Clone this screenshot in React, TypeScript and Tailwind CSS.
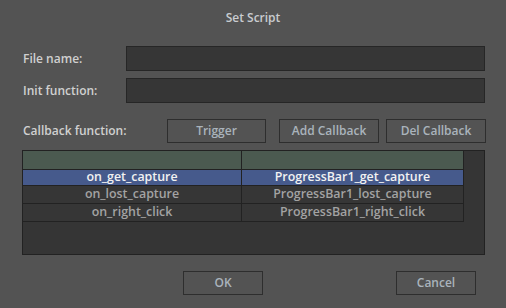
const rows = [
  { cb: "on_get_capture", fn: "ProgressBar1_get_capture", selected: true },
  { cb: "on_lost_capture", fn: "ProgressBar1_lost_capture", selected: false },
  { cb: "on_right_click", fn: "ProgressBar1_right_click", selected: false },
];

const Button = ({ label, className }: { label: string; className: string }) => (
  <div
    className={`h-[24px] border border-[#2e2e2e] flex items-center justify-center text-[#aab3bc] ${className}`}
  >
    {label}
  </div>
);

export default function App() {
  return (
    <div
      className="w-[506px] h-[308px] bg-[#535353] flex flex-col text-[12px] font-semibold overflow-hidden"
      style={{ fontFamily: '"Open Sans", "Noto Sans", sans-serif' }}
    >
      {/* Title */}
      <div className="h-[36px] pt-[8px] text-center text-[#c9ccd0] leading-[20px]">Set Script</div>

      {/* Fields */}
      <div className="pt-[10px] flex flex-col gap-[7px]">
        <div className="flex items-center">
          <div className="w-[126px] pl-[23px] text-[#d0d0d0]">File name:</div>
          <div className="w-[359px] h-[25px] bg-[#363636] border border-[#262626]" />
        </div>
        <div className="flex items-center">
          <div className="w-[126px] pl-[23px] text-[#d0d0d0]">Init function:</div>
          <div className="w-[359px] h-[25px] bg-[#363636] border border-[#262626]" />
        </div>
      </div>

      {/* Callback buttons */}
      <div className="mt-[16px] flex items-center">
        <div className="w-[167px] pl-[23px] text-[#d0d0d0]">Callback function:</div>
        <Button label="Trigger" className="w-[99px]" />
        <Button label="Add Callback" className="w-[100px] ml-[13px]" />
        <Button label="Del Callback" className="w-[100px] ml-[7px]" />
      </div>

      {/* Table */}
      <div className="mt-[7px] ml-[22px] w-[463px] h-[105px] bg-[#353535] border border-[#222]">
        <div className="w-[441px] border-r border-[#222] text-[12.4px]">
          <div className="grid grid-cols-[219px_221px] h-[19px] bg-[#4b5a50] border-b border-[#222]">
            <div className="border-r border-[#222]" />
            <div />
          </div>
          {rows.map((r) => (
            <div
              key={r.cb}
              className={`grid grid-cols-[219px_221px] border-b border-[#222] ${
                r.selected ? "h-[16px] bg-[#465a8c] text-[#f2f2f2]" : "h-[18px] bg-[#363636] text-[#a3a3a3]"
              }`}
            >
              <div className="border-r border-[#222] flex items-center justify-center leading-none">{r.cb}</div>
              <div className="flex items-center justify-center leading-none">{r.fn}</div>
            </div>
          ))}
        </div>
      </div>

      {/* Footer */}
      <div className="mt-[16px] flex">
        <Button label="OK" className="w-[80px] ml-[183px]" />
        <Button label="Cancel" className="w-[80px] ml-[133px]" />
      </div>
    </div>
  );
}
